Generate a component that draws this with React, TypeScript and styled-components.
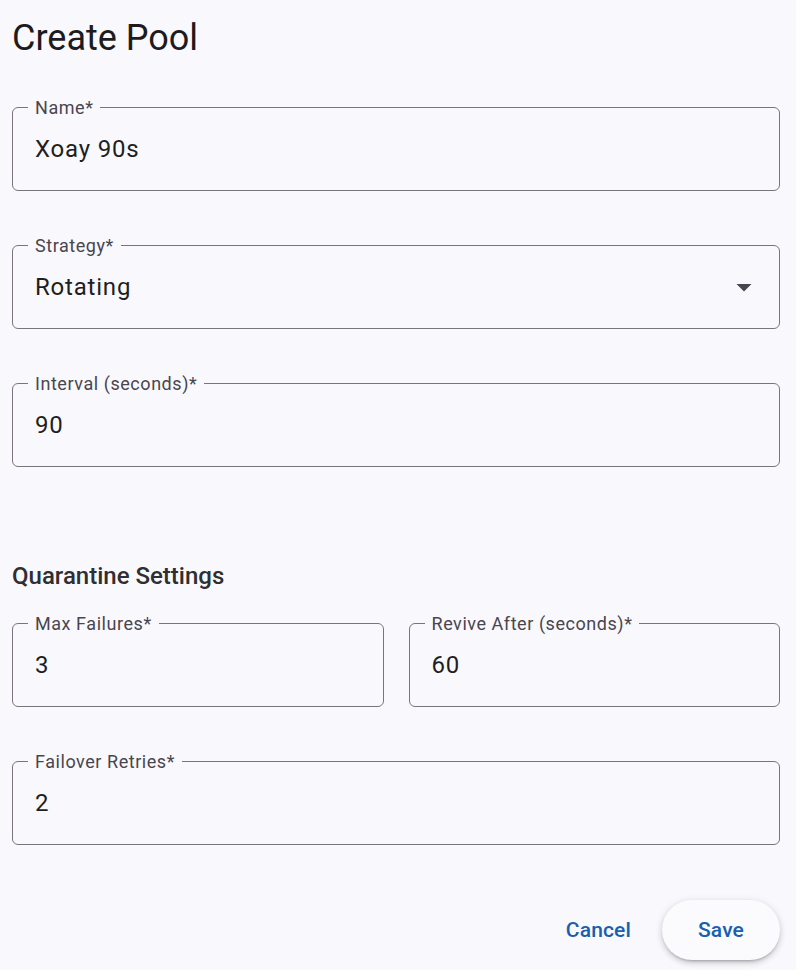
import React from "react";
import styled, { createGlobalStyle } from "styled-components";

const Global = createGlobalStyle`
  html, body { margin: 0; padding: 0; background: #f9f9fd; }
  body { font-family: Roboto, "Noto Sans", "Liberation Sans", sans-serif; }
  * { box-sizing: border-box; }
`;

const Page = styled.div`
  padding: 16px 16px 10px 12px;
  background: #f9f9fd;
  min-height: 970px;
`;

const Title = styled.h1`
  margin: 0;
  font-size: 36px;
  line-height: 44px;
  font-weight: 400;
  color: #1d1b20;
`;

const Stack = styled.div<{ $gap: number; $top: number }>`
  display: flex;
  flex-direction: column;
  gap: ${(p) => p.$gap}px;
  margin-top: ${(p) => p.$top}px;
`;

const Row = styled.div`
  display: grid;
  grid-template-columns: 1fr 1fr;
  gap: 25px;
`;

const Field = styled.div`
  position: relative;
  height: 84px;
  border: 1px solid #79747e;
  border-radius: 6px;
  display: flex;
  align-items: center;
  padding: 0 22px;
`;

const Label = styled.span`
  position: absolute;
  top: -11px;
  left: 15px;
  padding: 0 7px;
  background: #f9f9fd;
  font-size: 18px;
  line-height: 22px;
  letter-spacing: 0.55px;
  color: #49454f;
  white-space: nowrap;
`;

const Value = styled.span`
  flex: 1;
  font-size: 24px;
  line-height: 30px;
  letter-spacing: 0.8px;
  color: #1f1e23;
`;

const Arrow = styled.svg`
  width: 36px;
  height: 36px;
  margin-right: -5px;
  fill: #49454f;
`;

const SectionTitle = styled.h2`
  margin: 93px 0 0;
  font-size: 24px;
  line-height: 32px;
  font-weight: 500;
  color: #2e2e33;
`;

const Actions = styled.div`
  display: flex;
  justify-content: flex-end;
  align-items: center;
  gap: 19px;
  margin-top: 55px;
`;

const Button = styled.button<{ $raised?: boolean }>`
  height: 60px;
  padding: 0 ${(p) => (p.$raised ? 36 : 12)}px;
  border: none;
  border-radius: 30px;
  font-family: Roboto, "Noto Sans", "Liberation Sans", sans-serif;
  font-size: 21px;
  font-weight: 500;
  letter-spacing: 0.15px;
  color: #1760b0;
  background: ${(p) => (p.$raised ? "#fbfbfe" : "transparent")};
  box-shadow: ${(p) =>
    p.$raised
      ? "0 3px 3px -2px rgba(0,0,0,0.25), 0 3px 6px 0 rgba(0,0,0,0.14), 0 1px 10px 0 rgba(0,0,0,0.08)"
      : "none"};
  cursor: pointer;
`;

function TextField({ label, value, select }: { label: string; value: string; select?: boolean }) {
  return (
    <Field>
      <Label>{label}</Label>
      <Value>{value}</Value>
      {select && (
        <Arrow viewBox="0 0 24 24">
          <path d="M7 10l5 5 5-5z" />
        </Arrow>
      )}
    </Field>
  );
}

export default function App() {
  return (
    <>
      <Global />
      <Page>
        <Title>Create Pool</Title>
        <Stack $gap={54} $top={47}>
          <TextField label="Name*" value="Xoay 90s" />
          <TextField label="Strategy*" value="Rotating" select />
          <TextField label="Interval (seconds)*" value="90" />
        </Stack>
        <SectionTitle>Quarantine Settings</SectionTitle>
        <Stack $gap={54} $top={31}>
          <Row>
            <TextField label="Max Failures*" value="3" />
            <TextField label="Revive After (seconds)*" value="60" />
          </Row>
          <TextField label="Failover Retries*" value="2" />
        </Stack>
        <Actions>
          <Button>Cancel</Button>
          <Button $raised>Save</Button>
        </Actions>
      </Page>
    </>
  );
}
